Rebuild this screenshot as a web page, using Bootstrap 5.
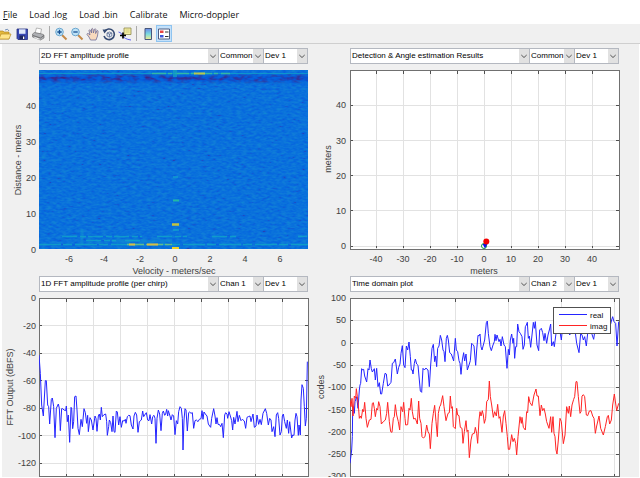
<!DOCTYPE html>
<html lang="en">
<head>
<meta charset="utf-8">
<meta name="viewport" content="width=device-width, initial-scale=1">
<title>Radar plots</title>
<link rel="stylesheet" href="https://cdn.jsdelivr.net/npm/bootstrap@5.3.0/dist/css/bootstrap.min.css">
<style>
body{font-family:"Liberation Sans",Arial,sans-serif;background:#fff;color:#111}
.menu-bar{height:24px;padding:6px 3px 0;gap:12px;font-family:"Open Sans","Noto Sans",sans-serif;font-size:9px;line-height:17px}
.menu-bar a{color:#111;text-decoration:none}
.menu-bar u{text-underline-offset:1px}
.tool-bar{height:20px;background:#f0f0f0;border-bottom:1px solid #cfcfcf;overflow:hidden}
.tool-bar .btn{width:16px;height:17px;border:0;border-radius:0;line-height:0;flex:none}
.tool-bar .btn:first-child{margin:0 1px 0 -3px}
.tool-bar .btn.active{background:#c4e1fa;outline:1px solid #8fc4f0;outline-offset:-1px}
.tool-bar svg{width:14px;height:14px}
.tool-sep{width:1px;height:15px;background:#aaa;margin:0 3px}
.figure-area{background:#f0f0f0;margin:0 1px 0 2px;padding:4px 15px 0 0}
.picker{display:grid;grid-template-columns:179fr 45fr 45fr;padding:0 5px 0 37px}
.picker .form-select{min-width:0;width:100%;height:16px;min-height:0;padding:0 10px 0 1px;border:1px solid #b4b8c0;border-right-width:0;border-radius:0;font:8px/14px "Liberation Sans",Arial,sans-serif;color:#000;background:url("data:image/svg+xml,%3Csvg xmlns='http://www.w3.org/2000/svg' viewBox='0 0 10 14'%3E%3Cpath fill='%23e1e1e1' d='M0 0h10v14H0z'/%3E%3Cpath fill='none' stroke='%23555' d='M2.3 6 5 8.5 7.7 6'/%3E%3C/svg%3E") right center/10px 14px no-repeat #fff}
.picker .form-select:last-child{border-right-width:1px}
.plot{display:block;width:100%;height:auto}
.plot text{font-family:"Liberation Sans",Arial,sans-serif;font-size:9px;fill:#404040}
.plot .key text{font-size:8px;fill:#111}
.ax-y text{text-anchor:end}
.ax-x text,.plot .ttl{text-anchor:middle}
.frame-line{fill:none;stroke:#707070;shape-rendering:crispEdges}
.grid-line{stroke:#e2e2e2;fill:none;shape-rendering:crispEdges}
.tick-v,.tick-h{stroke:#505050;fill:none;shape-rendering:crispEdges}
.tick-v{stroke-dasharray:3 172 3 0}
.tick-h{stroke-dasharray:3 263 3 0}
.trace{fill:none;stroke-width:1;vector-effect:non-scaling-stroke;stroke-linejoin:round}
.blue-ln{stroke:#2424ff}.red-ln{stroke:#ff2424}
</style>
</head>
<body>
<nav class="menu-bar d-flex" aria-label="Menu">
<a href="#"><u>F</u>ile</a><a href="#">Load .log</a><a href="#">Load .bin</a><a href="#">Calibrate</a><a href="#">Micro-doppler</a>
</nav>
<div class="tool-bar d-flex align-items-center" role="toolbar" aria-label="Figure tools">
<button class="btn p-0" type="button" aria-label="Open"><svg viewBox="0 0 14 14"><path d="M1 12V4h4l1 1h5v7z" fill="#e3b83c" stroke="#a47b1c" stroke-width=".6"/><path d="M3 7h10l-2 5H1z" fill="#ffe58a" stroke="#b98d24" stroke-width=".7"/><path d="M7 3q3-2 4 1" fill="none" stroke="#5577aa" stroke-width=".8"/></svg></button>
<button class="btn p-0" type="button" aria-label="Save"><svg viewBox="0 0 14 14"><path d="M2 2h10.500v10.500H3L2 11.500z" fill="#3949b5" stroke="#26307f" stroke-width=".8"/><path d="M4 2.300h6.500v4.500H4z" fill="#dfe8fa"/><path d="M4.500 8.500h5.500v4H4.500z" fill="#1d2560"/><path d="M8 9.500h1.300v2.500H8z" fill="#fff"/></svg></button>
<button class="btn p-0" type="button" aria-label="Print"><svg viewBox="0 0 14 14"><path d="m4 6 1.500-5 5 1-1 5z" fill="#fff" stroke="#888" stroke-width=".6"/><path d="m1.500 7 2-1.500L11 7l2 1v3l-3.500 2-8-3z" fill="#aeb0b4" stroke="#666" stroke-width=".6"/><path d="m2 8.500 7.500 2.500L13 8.500" fill="none" stroke="#555" stroke-width=".7"/><path d="m3.500 10.500 5 1.700" stroke="#f5f5f5"/></svg></button>
<span class="tool-sep"></span>
<button class="btn p-0" type="button" aria-label="Zoom in"><svg viewBox="0 0 14 14"><path d="m8 8 4.500 4.500" stroke="#c48a48" stroke-width="2"/><circle cx="5.500" cy="5" r="3.800" fill="#bfe3f7" stroke="#6aa6cf"/><path d="M3.300 5h4.400M5.500 2.800v4.400" stroke="#174f91" stroke-width="1.300"/></svg></button>
<button class="btn p-0" type="button" aria-label="Zoom out"><svg viewBox="0 0 14 14"><path d="m8 8 4.500 4.500" stroke="#c48a48" stroke-width="2"/><circle cx="5.500" cy="5" r="3.800" fill="#bfe3f7" stroke="#6aa6cf"/><path d="M3.300 5h4.400" stroke="#174f91" stroke-width="1.300"/></svg></button>
<button class="btn p-0" type="button" aria-label="Pan"><svg viewBox="0 0 14 14"><path d="M4.500 13 3 10 1 7.500q0-1.500 1.500-.8L4 8 3 3.500q.3-1.200 1.300-.3L5.500 6V2q.8-1.300 1.500 0l.4 4L8.500 2.200q1-1 1.400.3L9.600 6.500l1.300-2.700q1.200-.6 1.200.6L11.500 9l-1.500 4z" fill="#f8d9bd" stroke="#6d6c98" stroke-width=".8"/></svg></button>
<button class="btn p-0" type="button" aria-label="Rotate"><svg viewBox="0 0 14 14"><path d="M2.500 4.500A5.300 5.300 0 1 1 2 9" fill="none" stroke="#354a73" stroke-width="1.600"/><path d="M.5 2.500h5L2.500 6.500z" fill="#354a73"/><path d="m5 6 2.500-1 2.300 1v3L7.500 10.200 5 9zM5 6l2.500 1 2.300-1M7.500 7v3" fill="#dce4f2" stroke="#4a5e88" stroke-width=".7"/></svg></button>
<button class="btn p-0" type="button" aria-label="Data cursor"><svg viewBox="0 0 14 14"><path d="M6 1h7v6.500H6z" fill="#f5efa5" stroke="#8d884b" stroke-width=".8"/><path d="M7.500 3h4M7.500 5h4" stroke="#c4bd70" stroke-width=".7"/><path d="M.5 5Q3 5 4.500 8.500T13 13" fill="none" stroke="#5d5ef0"/><path d="M5 5.500v6M2 8.500h6" stroke="#000" stroke-width="1.700"/></svg></button>
<span class="tool-sep"></span>
<button class="btn p-0" type="button" aria-label="Insert colorbar"><svg viewBox="0 0 14 14"><defs><linearGradient id="cb" x2="0" y2="1"><stop stop-color="#6f87e8"/><stop offset=".5" stop-color="#78dce0"/><stop offset="1" stop-color="#f4ed8d"/></linearGradient></defs><path d="M4 1.500h6.500v11H4z" fill="url(#cb)" stroke="#47577c"/></svg></button>
<button class="btn p-0 active" type="button" aria-label="Insert legend" aria-pressed="true"><svg viewBox="0 0 14 14"><path d="M1.500 2h11v10h-11z" fill="#fff" stroke="#4e5c80"/><path d="M3 3.500h3.500V6H3z" fill="#e84444"/><path d="M3 8h3.500v2.500H3z" fill="#3b55dc"/><path d="M8 5h3.500M8 9.500h3.500" stroke="#333"/></svg></button>
</div>
<main class="figure-area">
<div class="row row-cols-2 g-0">
<section class="col">
<div class="picker">
<select class="form-select" aria-label="Plot 1"><option>2D FFT amplitude profile</option></select><select class="form-select" aria-label="Plot 1 channel"><option>Common</option></select><select class="form-select" aria-label="Plot 1 device"><option>Dev 1</option></select>
</div>
<svg class="plot" viewBox="0 0 311 212" role="img" aria-label="Distance against velocity">
<defs>
<filter id="sea" x="0" y="0" width="1" height="1" color-interpolation-filters="sRGB"><feTurbulence type="fractalNoise" baseFrequency=".2 .45" numOctaves="2" seed="7"/><feColorMatrix values="1 0 0 0 0 1 0 0 0 0 1 0 0 0 0 0 0 0 0 1"/><feComponentTransfer><feFuncR type="table" tableValues=".2 .16 .08 .03 .03 .04 .05 .06 .06 .04 .03"/><feFuncG type="table" tableValues=".2 .25 .35 .4 .425 .445 .465 .485 .51 .55 .57"/><feFuncB type="table" tableValues=".6 .7 .82 .87 .87 .86 .86 .85 .84 .83 .82"/></feComponentTransfer></filter>
<filter id="deep" x="0" y="0" width="1" height="1" color-interpolation-filters="sRGB"><feTurbulence type="fractalNoise" baseFrequency=".14 .3" numOctaves="2" seed="3"/><feColorMatrix values="1 0 0 0 0 1 0 0 0 0 1 0 0 0 0 0 0 0 0 1"/><feComponentTransfer><feFuncR type="table" tableValues=".22 .22 .22 .2 .14 .05 .02 .02 .03 .03 .03"/><feFuncG type="table" tableValues=".15 .15 .15 .18 .24 .31 .36 .39 .4 .4 .4"/><feFuncB type="table" tableValues=".53 .53 .53 .6 .7 .8 .86 .86 .86 .86 .86"/></feComponentTransfer></filter>
<linearGradient id="fade" x2="0" y2="1"><stop stop-color="#000"/><stop offset=".4" stop-color="#fff"/><stop offset=".65" stop-color="#ddd"/><stop offset="1" stop-color="#000"/></linearGradient>
<mask id="band"><rect x="37" y="9" width="269" height="11" fill="url(#fade)"/></mask>
</defs>
<rect x="37" y="6" width="269" height="179" filter="url(#sea)"/>
<g mask="url(#band)"><rect x="37" y="9" width="269" height="11" filter="url(#deep)"/></g>
<path d="M37 9.500H306" stroke="#10a6c8" opacity=".7"/>
<path d="M150 9.500h78" stroke="#32b8a5" stroke-width="1.500" stroke-dasharray="14 2 4 3"/>
<path d="M192 9.500h11" stroke="#b9c84c" stroke-width="2"/>
<path d="M173 6v7" stroke="#16a5be" stroke-width="4" opacity=".7"/>
<path d="M37 180.500H306" stroke="#10abc4" stroke-width="1.500" opacity=".75" stroke-dasharray="22 2 9 3"/>
<path d="M60 172.500H140M155 172.500h30M210 172.500h25M296 172.500h9M84 176.500h30M123 176.500h17" stroke="#10a9c8" stroke-width="1.500" opacity=".75" stroke-dasharray="15 3 6 2"/>
<path d="M80 165v16M110 177h60" stroke="#14a2cb" opacity=".35" stroke-width="3"/>
<path d="M125 180.500h45" stroke="#5fbd8c" stroke-width="1.500" stroke-dasharray="17 2"/>
<path d="M127 180.500h6M145 180.500h11" stroke="#d6bd46" stroke-width="2"/>
<path d="M171 136.500h6" stroke="#22b8a6" stroke-width="2"/><path d="M170 160.500h7" stroke="#c4c33f" stroke-width="2.500"/><path d="M170 184h7" stroke="#f1d226" stroke-width="2"/><path d="M171 166h6M171 113h5" stroke="#139fcf" stroke-width="1.500"/>
<g class="ax-y"><text x="34" y="45">40</text><text x="34" y="81">30</text><text x="34" y="117">20</text><text x="34" y="153">10</text><text x="34" y="189">0</text></g>
<g class="ax-x"><text x="67" y="198">-6</text><text x="102" y="198">-4</text><text x="138" y="198">-2</text><text x="173" y="198">0</text><text x="208" y="198">2</text><text x="243" y="198">4</text><text x="278" y="198">6</text></g>
<text class="ttl" x="172" y="210">Velocity - meters/sec</text>
<text class="ttl" transform="translate(19 96) rotate(-90)">Distance - meters</text>
</svg>
</section>
<section class="col">
<div class="picker">
<select class="form-select" aria-label="Plot 2"><option>Detection &amp; Angle estimation Results</option></select><select class="form-select" aria-label="Plot 2 channel"><option>Common</option></select><select class="form-select" aria-label="Plot 2 device"><option>Dev 1</option></select>
</div>
<svg class="plot" viewBox="0 0 311 212" role="img" aria-label="Detections">
<rect x="37" y="6" width="269" height="179" fill="#fff"/>
<path class="grid-line" d="M63 6v179M90 6v179M117 6v179M144 6v179M171 6v179M198 6v179M225 6v179M252 6v179M279 6v179M37 41h269M37 76h269M37 111h269M37 146h269M37 182h269"/>
<path class="tick-v" d="M63 7v177M90 7v177M117 7v177M144 7v177M171 7v177M198 7v177M225 7v177M252 7v177M279 7v177"/>
<path class="tick-h" d="M37 41h269M37 76h269M37 111h269M37 146h269M37 182h269"/>
<rect class="frame-line" x="37" y="6" width="269" height="179"/>
<circle cx="171" cy="182" r="2.500" fill="#fff" stroke="#159a35"/><path d="M169.500 180h5l-2.500 4.500z" fill="#1010e8"/><circle cx="173.300" cy="177.500" r="3" fill="#f50000"/>
<g class="ax-y"><text x="33" y="44">40</text><text x="33" y="80">30</text><text x="33" y="115">20</text><text x="33" y="150">10</text><text x="33" y="185">0</text></g>
<g class="ax-x"><text x="63" y="198">-40</text><text x="90" y="198">-30</text><text x="117" y="198">-20</text><text x="144" y="198">-10</text><text x="171" y="198">0</text><text x="198" y="198">10</text><text x="225" y="198">20</text><text x="252" y="198">30</text><text x="279" y="198">40</text></g>
<text class="ttl" x="171" y="210">meters</text>
<text class="ttl" transform="translate(18 95) rotate(-90)">meters</text>
</svg>
</section>
<section class="col">
<div class="picker">
<select class="form-select" aria-label="Plot 3"><option>1D FFT amplitude profile (per chirp)</option></select><select class="form-select" aria-label="Plot 3 channel"><option>Chan 1</option></select><select class="form-select" aria-label="Plot 3 device"><option>Dev 1</option></select>
</div>
<svg class="plot" viewBox="0 0 311 185" role="img" aria-label="FFT output">
<rect x="37" y="6" width="269" height="179" fill="#fff"/>
<path class="grid-line" d="M64 6v179M91 6v179M118 6v179M145 6v179M172 6v179M199 6v179M226 6v179M253 6v179M280 6v179M37 33h269M37 61h269M37 88h269M37 116h269M37 143h269M37 171h269"/>
<path class="tick-v" d="M64 7v177M91 7v177M118 7v177M145 7v177M172 7v177M199 7v177M226 7v177M253 7v177M280 7v177"/>
<path class="tick-h" d="M37 33h269M37 61h269M37 88h269M37 116h269M37 143h269M37 171h269"/>
<rect class="frame-line" x="37" y="6" width="269" height="178"/>
<svg x="37" y="6" width="269" height="179" viewBox="118 24 807 537"><polyline class="trace blue-ln" points="118,195 122,250 126,345 131,378 137,272 140,272 144,345 147,350 150,402 155,328 158,324 162,350 166,443 170,355 176,342 179,355 182,422 186,356 189,356 193,360 198,362 200,348 203,395 206,375 210,457 214,352 216,354 219,416 222,395 225,320 229,318 232,360 235,415 239,434 244,388 248,410 253,356 257,368 261,400 264,376 266,425 271,383 275,390 280,420 286,378 289,385 292,424 296,378 299,372 302,390 305,352 308,380 313,374 318,372 321,395 323,436 327,410 329,390 333,398 337,425 340,378 343,425 346,427 350,363 353,366 357,405 361,380 365,412 369,392 374,393 377,388 379,400 383,380 387,376 391,377 395,405 400,417 403,378 407,367 411,375 415,427 419,395 425,390 429,363 432,380 437,372 440,368 444,390 448,392 451,374 456,402 459,380 463,376 466,385 469,460 472,385 476,360 480,372 484,422 488,370 491,363 495,376 498,372 501,358 504,378 506,362 511,378 514,390 518,374 522,378 526,434 530,392 534,402 537,365 541,350 545,355 548,385 550,480 553,390 556,356 559,360 563,423 567,368 570,366 574,370 578,368 582,415 586,392 590,390 595,395 599,388 604,386 607,362 610,388 613,366 617,372 622,378 626,402 630,408 633,412 636,385 642,356 646,378 649,402 652,383 655,403 660,404 663,410 667,400 671,443 675,375 678,368 682,372 684,385 688,365 692,378 696,392 699,420 702,382 706,402 712,364 715,395 719,376 724,392 728,388 734,393 738,415 742,382 746,380 751,378 754,395 760,372 764,412 769,408 772,375 777,403 781,388 785,404 790,370 795,360 797,356 801,370 806,405 810,385 814,390 817,425 822,410 826,440 830,375 834,368 837,385 841,435 845,425 848,378 851,372 855,395 860,415 863,390 867,430 870,395 876,444 879,435 883,436 886,390 889,370 892,380 896,436 898,405 902,435 904,330 907,284 911,295 914,350 917,408 920,385 923,215"/></svg>
<g class="ax-y"><text x="34" y="9">0</text><text x="34" y="37">-20</text><text x="34" y="64">-40</text><text x="34" y="92">-60</text><text x="34" y="119">-80</text><text x="34" y="147">-100</text><text x="34" y="174">-120</text></g>
<text class="ttl" transform="translate(11 95) rotate(-90)">FFT Output (dBFS)</text>
</svg>
</section>
<section class="col">
<div class="picker">
<select class="form-select" aria-label="Plot 4"><option>Time domain plot</option></select><select class="form-select" aria-label="Plot 4 channel"><option>Chan 2</option></select><select class="form-select" aria-label="Plot 4 device"><option>Dev 1</option></select>
</div>
<svg class="plot" viewBox="0 0 311 185" role="img" aria-label="Time domain signal">
<rect x="37" y="6" width="269" height="179" fill="#fff"/>
<path class="grid-line" d="M90 6v179M142 6v179M195 6v179M248 6v179M301 6v179M37 28h269M37 51h269M37 73h269M37 95h269M37 118h269M37 140h269M37 162h269"/>
<path class="tick-v" d="M90 7v177M142 7v177M195 7v177M248 7v177M301 7v177"/>
<path class="tick-h" d="M37 28h269M37 51h269M37 73h269M37 95h269M37 118h269M37 140h269M37 162h269"/>
<rect class="frame-line" x="37" y="6" width="269" height="178"/>
<svg x="37" y="6" width="269" height="179" viewBox="90 24 807 537">
<polyline class="trace blue-ln" points="90,520 95,480 97,440 98,360 101,350 103,370 105,335 110,320 114,355 118,300 120,285 122,280 125,236 128,240 131,238 134,258 140,276 144,236 147,240 150,210 154,236 157,246 163,236 166,270 170,235 174,290 178,278 182,312 185,312 190,280 195,250 199,252 203,288 207,285 213,277 217,220 221,218 226,207 232,252 236,232 240,222 243,190 247,167 251,225 255,233 259,168 263,180 267,156 271,200 274,240 277,240 279,252 283,220 286,207 290,222 294,226 298,270 301,303 305,307 309,235 313,240 318,234 321,238 324,240 328,290 332,225 336,175 340,163 344,215 347,198 350,230 353,175 357,168 361,136 365,150 369,180 372,185 375,215 379,145 382,136 385,150 389,188 394,192 401,213 406,145 409,180 413,185 417,212 420,220 423,253 427,210 431,188 434,213 438,192 442,240 447,225 451,212 455,160 458,163 462,168 467,226 470,180 474,136 477,138 480,132 483,170 486,180 490,165 494,150 499,98 502,93 505,130 510,170 514,182 519,165 523,155 525,133 528,152 531,135 537,155 540,148 543,168 547,140 552,165 556,170 559,210 561,235 565,178 568,195 571,150 575,132 579,160 581,145 584,205 587,170 590,170 593,102 597,125 601,130 606,140 609,178 613,165 616,110 619,105 622,97 625,145 628,138 632,172 636,135 640,97 643,115 646,95 651,165 656,182 659,120 664,115 668,128 672,152 675,130 680,160 684,135 688,120 692,102 695,168 700,155 703,170 708,130 720,125 724,150 728,110 740,110 746,125 749,135 753,128 765,120 770,160 777,188 782,130 786,135 790,150 794,140 799,168 803,130 810,115 815,130 821,148 825,120 865,95 872,102 875,90 878,80 882,95 887,100 891,168 896,95"/>
<polyline class="trace red-ln" points="90,330 93,350 96,325 99,378 103,318 107,325 109,296 112,320 115,345 118,385 121,378 124,385 128,358 131,365 134,337 138,385 142,412 148,390 153,388 157,340 160,338 163,355 166,380 170,355 173,360 176,335 180,350 184,402 190,395 196,390 200,370 203,337 208,395 212,425 216,427 220,385 223,380 226,344 230,375 235,395 239,420 243,350 248,365 251,337 255,385 257,405 263,404 267,355 270,360 274,325 277,365 281,387 286,385 292,402 296,333 299,385 303,400 306,440 310,444 315,440 320,405 324,425 328,432 331,476 336,400 340,370 344,346 348,395 352,440 355,370 359,350 362,345 368,317 372,350 378,392 384,370 388,368 391,318 394,355 397,350 400,410 406,416 410,355 413,375 417,377 421,412 426,415 429,460 433,425 438,392 441,425 444,420 448,503 453,450 457,432 463,430 466,412 470,430 473,460 477,390 480,365 483,378 487,362 490,375 493,400 497,385 500,335 505,328 508,273 511,320 515,345 520,382 524,365 529,378 533,343 537,385 540,380 546,427 550,378 554,362 558,400 562,440 565,478 569,478 575,434 579,455 583,445 587,460 590,495 594,440 600,380 604,400 606,382 610,412 616,420 620,365 623,368 626,320 630,338 636,347 642,315 648,297 651,318 655,318 660,377 664,345 668,362 672,355 676,372 680,395 687,415 692,380 695,427 699,380 702,430 705,440 708,480 711,492 715,450 720,385 724,395 730,461 735,435 740,350 745,370 748,348 752,380 756,345 761,328 764,320 768,275 771,275 775,320 780,370 783,365 786,318 790,314 794,320 799,375 803,377 808,363 813,362 818,378 822,385 826,430 830,408 837,378 842,415 850,435 856,410 862,380 865,376 869,402 874,390 878,345 883,312 890,362 896,340"/>
</svg>
<g class="key"><rect x="240" y="15" width="57" height="26" fill="#fff" stroke="#505050" shape-rendering="crispEdges"/><path class="blue-ln" d="M246 22.500h28"/><path class="red-ln" d="M246 33.500h28"/><text x="277" y="26">real</text><text x="277" y="37">imag</text></g>
<g class="ax-y"><text x="33" y="9">100</text><text x="33" y="31">50</text><text x="33" y="54">0</text><text x="33" y="76">-50</text><text x="33" y="98">-100</text><text x="33" y="121">-150</text><text x="33" y="143">-200</text><text x="33" y="165">-250</text><text x="33" y="187">-300</text></g>
<text class="ttl" transform="translate(11 95) rotate(-90)">codes</text>
</svg>
</section>
</div>
</main>
<script src="https://cdn.jsdelivr.net/npm/bootstrap@5.3.0/dist/js/bootstrap.bundle.min.js"></script>
</body>
</html>
